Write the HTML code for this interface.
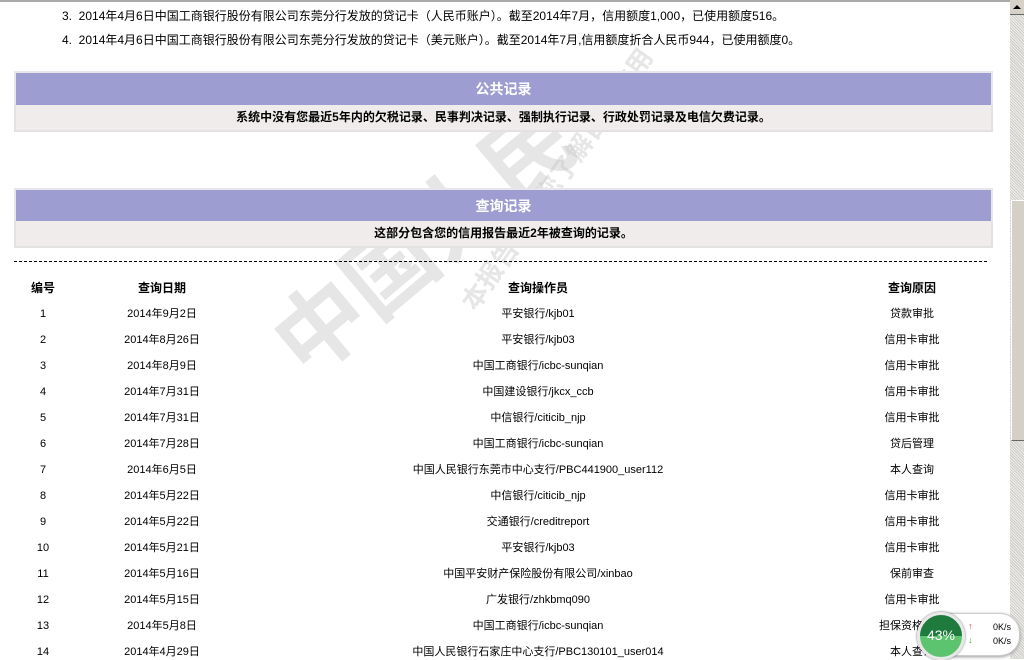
<!DOCTYPE html>
<html><head><meta charset="utf-8"><style>
*{margin:0;padding:0;box-sizing:border-box}
body{width:1024px;height:659px;overflow:hidden;background:#fff;position:relative;font-family:"Liberation Sans","Noto Sans CJK SC","WenQuanYi Zen Hei",sans-serif;font-size:11px;color:#000}
.topline{position:absolute;left:0;top:0;width:1010px;height:2px;background:#a9a9a9}
.li{position:absolute;left:62px;font-size:12px;white-space:nowrap;line-height:14px}
.hdr{position:absolute;left:14px;width:979px;height:34px;background:#9e9dd2;color:#fff;font-weight:bold;font-size:14px;text-align:center;line-height:32px;border:2px solid #e6e6ec;border-bottom:none}
.sub{position:absolute;left:14px;width:979px;height:27px;background:#efeceb;font-weight:bold;font-size:12px;text-align:center;line-height:25px;border:2px solid #e2e2e2;border-top:none}
.dash{position:absolute;left:14px;top:261px;width:973px;border-top:1px dashed #000}
.r{position:absolute;left:0;width:1010px;height:16px;font-size:11px;line-height:16px}
.r span{position:absolute;top:0;transform:translateX(-50%);white-space:nowrap}
.h span{font-weight:bold;font-size:12px}
.c1{left:43px}.c2{left:162px}.c3{left:538px}.c4{left:912px}
.sb{position:absolute;left:1010px;top:0;width:14px;height:659px;background-color:#f0eee8;background-image:repeating-linear-gradient(45deg,#ccc 0 1px,transparent 1px 2px)}
.sbup{position:absolute;left:1010px;top:0;width:14px;height:15px;background:#d6d2ca;border-bottom:1px solid #666}
.thumb{position:absolute;left:1011px;top:200px;width:13px;height:241px;background:#d4d0c8;border-left:1px solid #fff;border-top:1px solid #fff;border-bottom:1px solid #666}
.wm{position:absolute;color:#c8c8c8;font-weight:bold;white-space:nowrap}
</style></head><body>
<div class="topline"></div>
<div class="wm" style="left:240px;top:170px;font-size:90px;transform:rotate(-40deg);opacity:.45">中国人民</div>
<div class="wm" style="left:400px;top:160px;font-size:26px;transform:rotate(-55deg);opacity:.45">本报告仅供您了解自己信用</div>
<div class="li" style="top:9px">3.&nbsp;&nbsp;2014年4月6日中国工商银行股份有限公司东莞分行发放的贷记卡（人民币账户）。截至2014年7月，信用额度1,000，已使用额度516。</div>
<div class="li" style="top:33px">4.&nbsp;&nbsp;2014年4月6日中国工商银行股份有限公司东莞分行发放的贷记卡（美元账户）。截至2014年7月,信用额度折合人民币944，已使用额度0。</div>
<div class="hdr" style="top:71px">公共记录</div>
<div class="sub" style="top:105px">系统中没有您最近5年内的欠税记录、民事判决记录、强制执行记录、行政处罚记录及电信欠费记录。</div>
<div class="hdr" style="top:188px">查询记录</div>
<div class="sub" style="top:221px">这部分包含您的信用报告最近2年被查询的记录。</div>
<div class="dash"></div>
<div class="r h" style="top:280px"><span class="c1">编号</span><span class="c2">查询日期</span><span class="c3">查询操作员</span><span class="c4">查询原因</span></div>
<div class="r" style="top:306px"><span class="c1">1</span><span class="c2">2014年9月2日</span><span class="c3">平安银行/kjb01</span><span class="c4">贷款审批</span></div>
<div class="r" style="top:332px"><span class="c1">2</span><span class="c2">2014年8月26日</span><span class="c3">平安银行/kjb03</span><span class="c4">信用卡审批</span></div>
<div class="r" style="top:358px"><span class="c1">3</span><span class="c2">2014年8月9日</span><span class="c3">中国工商银行/icbc-sunqian</span><span class="c4">信用卡审批</span></div>
<div class="r" style="top:384px"><span class="c1">4</span><span class="c2">2014年7月31日</span><span class="c3">中国建设银行/jkcx_ccb</span><span class="c4">信用卡审批</span></div>
<div class="r" style="top:410px"><span class="c1">5</span><span class="c2">2014年7月31日</span><span class="c3">中信银行/citicib_njp</span><span class="c4">信用卡审批</span></div>
<div class="r" style="top:436px"><span class="c1">6</span><span class="c2">2014年7月28日</span><span class="c3">中国工商银行/icbc-sunqian</span><span class="c4">贷后管理</span></div>
<div class="r" style="top:462px"><span class="c1">7</span><span class="c2">2014年6月5日</span><span class="c3">中国人民银行东莞市中心支行/PBC441900_user112</span><span class="c4">本人查询</span></div>
<div class="r" style="top:488px"><span class="c1">8</span><span class="c2">2014年5月22日</span><span class="c3">中信银行/citicib_njp</span><span class="c4">信用卡审批</span></div>
<div class="r" style="top:514px"><span class="c1">9</span><span class="c2">2014年5月22日</span><span class="c3">交通银行/creditreport</span><span class="c4">信用卡审批</span></div>
<div class="r" style="top:540px"><span class="c1">10</span><span class="c2">2014年5月21日</span><span class="c3">平安银行/kjb03</span><span class="c4">信用卡审批</span></div>
<div class="r" style="top:566px"><span class="c1">11</span><span class="c2">2014年5月16日</span><span class="c3">中国平安财产保险股份有限公司/xinbao</span><span class="c4">保前审查</span></div>
<div class="r" style="top:592px"><span class="c1">12</span><span class="c2">2014年5月15日</span><span class="c3">广发银行/zhkbmq090</span><span class="c4">信用卡审批</span></div>
<div class="r" style="top:618px"><span class="c1">13</span><span class="c2">2014年5月8日</span><span class="c3">中国工商银行/icbc-sunqian</span><span class="c4">担保资格审查</span></div>
<div class="r" style="top:644px"><span class="c1">14</span><span class="c2">2014年4月29日</span><span class="c3">中国人民银行石家庄中心支行/PBC130101_user014</span><span class="c4">本人查询</span></div>
<div class="sb"></div><div class="sbup"><div style="position:absolute;left:3px;top:5px;border-left:4px solid transparent;border-right:4px solid transparent;border-bottom:4px solid #000"></div></div>
<div class="thumb"></div>
<div style="position:absolute;left:935px;top:613px;width:85px;height:43px;background:#fff;border:1px solid #ccc;border-radius:0 20px 20px 0;box-shadow:0 1px 3px #999"></div>
<div style="position:absolute;left:968px;top:621px;color:#d33;font-size:9px">↑</div>
<div style="position:absolute;left:968px;top:635px;color:#3a3;font-size:9px">↓</div>
<div style="position:absolute;left:993px;top:622px;font-size:9px">0K/s</div>
<div style="position:absolute;left:993px;top:636px;font-size:9px">0K/s</div>
<div style="position:absolute;left:917px;top:612px;width:48px;height:48px;border-radius:50%;background:linear-gradient(#1f7a3e 0 50%,#5cc46f 50%);border:3px solid #e8e8e8;box-shadow:0 0 2px #666;color:#fff;font-size:14px;text-align:center;line-height:40px">43%</div>
</body></html>
